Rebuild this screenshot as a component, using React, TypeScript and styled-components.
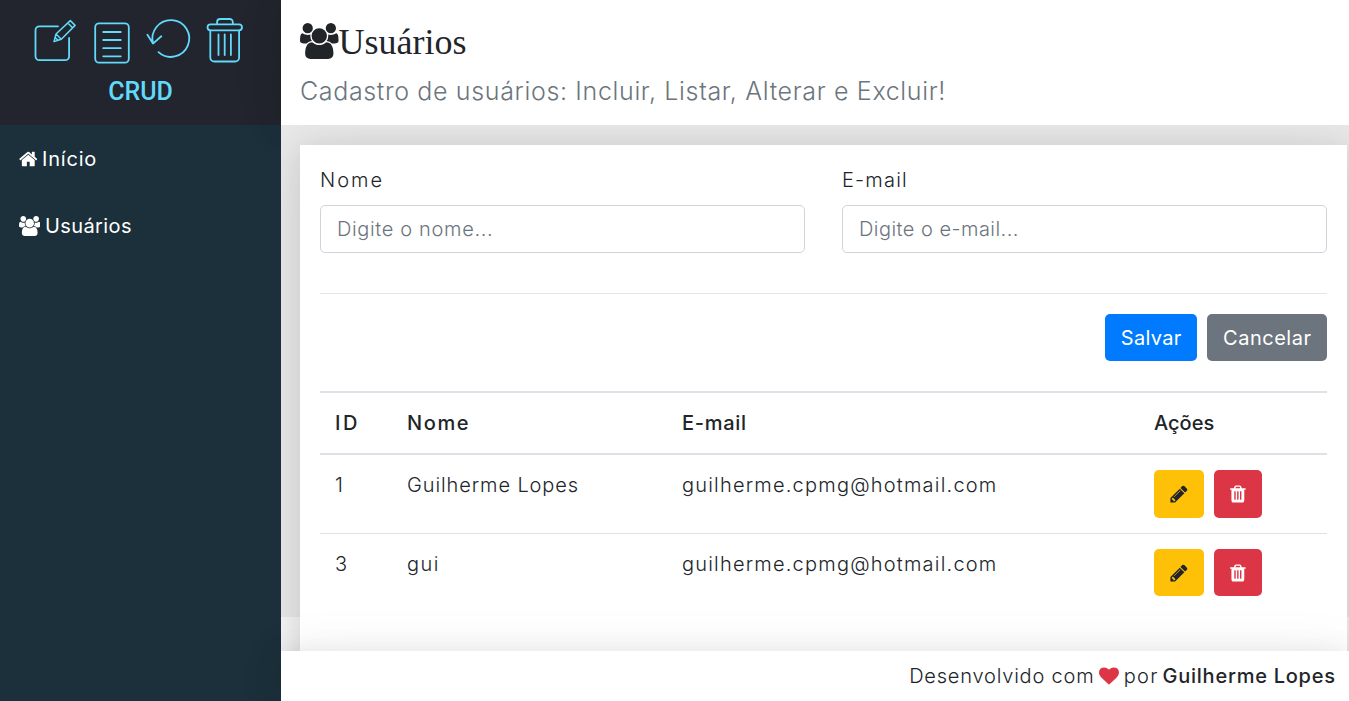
import React from 'react';
import styled, { createGlobalStyle } from 'styled-components';

const shadow = '0 2.5px 29px 0 rgba(0, 0, 0, 0.1), 0 2.5px 61px 0 rgba(0, 0, 0, 0.06)';

const GlobalStyle = createGlobalStyle`
  *, *::before, *::after { box-sizing: border-box; }
  html, body { margin: 0; height: 100%; overflow: hidden; }
  body {
    font-family: Inter, "Open Sans", sans-serif;
    font-size: 20px;
    font-weight: 300;
    line-height: 30px;
    color: #212529;
  }
`;

const Shell = styled.div`
  display: grid;
  grid-template-columns: 281px 1fr;
  grid-template-rows: 125px minmax(0, 1fr) 50px;
  grid-template-areas: 'logo header' 'menu content' 'menu footer';
  height: 100vh;
  overflow: hidden;
  background: #f5f5f5;
`;

const Logo = styled.aside`
  grid-area: logo;
  display: flex;
  flex-direction: column;
  align-items: center;
  padding-top: 12px;
  background: #22252d;
  box-shadow: ${shadow};
`;

const LogoText = styled.span`
  font: 500 25px/30px Roboto, sans-serif;
  color: #61dafb;
  margin-top: 9px;
`;

const Menu = styled.aside`
  grid-area: menu;
  background: #1c303b;
`;

const MenuLink = styled.a`
  display: flex;
  align-items: center;
  gap: 5px;
  height: 67px;
  padding-left: 18.5px;
  color: #fff;
  font-weight: 400;
`;

const Header = styled.header`
  grid-area: header;
  padding: 22px 19px 0;
  background: #fff;
  box-shadow: ${shadow};
`;

const Title = styled.h1`
  display: flex;
  align-items: flex-start;
  height: 51px;
  margin: 0;
  padding-top: 1px;
  font: 400 36px/39px "Liberation Serif", serif;
`;

const Subtitle = styled.p`
  margin: 0;
  font-size: 25px;
  line-height: 37px;
  letter-spacing: 0.65px;
  color: #6c757d;
`;

const Main = styled.main`
  grid-area: content;
  overflow: hidden;
  background: #f5f5f5;
`;

const Content = styled.div`
  height: 492px;
  padding: 20px 2px 0 19px;
  background: #e8e8e8;
`;

const Card = styled.section`
  height: 560px;
  padding: 20px;
  background: #fff;
  box-shadow: ${shadow};
`;

const Fields = styled.div`
  display: grid;
  grid-template-columns: 1fr 1fr;
  column-gap: 37px;
`;

const Field = styled.label`
  display: flex;
  flex-direction: column;
  gap: 10px;
`;

const Input = styled.input<{ $track: number }>`
  height: 48px;
  padding: 0 16px;
  border: 1px solid #ced4da;
  border-radius: 5px;
  font: inherit;
  letter-spacing: ${(p) => p.$track}px;
  outline: none;
  &::placeholder { color: #6c757d; opacity: 1; }
`;

const Divider = styled.hr`
  margin: 40px 0 20px;
  border: 0;
  border-top: 1px solid rgba(0, 0, 0, 0.1);
`;

const Actions = styled.div`
  display: flex;
  justify-content: flex-end;
  gap: 10px;
  margin-bottom: 30px;
`;

const tones = {
  primary: ['#007bff', '#fff'],
  secondary: ['#6c757d', '#fff'],
  warning: ['#ffc107', '#212529'],
  danger: ['#dc3545', '#fff'],
};

const Button = styled.button<{ $tone: keyof typeof tones; $width: number; $height?: number }>`
  display: flex;
  align-items: center;
  justify-content: center;
  width: ${(p) => p.$width}px;
  height: ${(p) => p.$height ?? 47}px;
  padding: 0;
  border: 0;
  border-radius: 5px;
  font: inherit;
  font-weight: 400;
  background: ${(p) => tones[p.$tone][0]};
  color: ${(p) => tones[p.$tone][1]};
`;

const Table = styled.table`
  width: 100%;
  table-layout: fixed;
  border-collapse: separate;
  border-spacing: 0;
`;

const Th = styled.th<{ $width?: number }>`
  width: ${(p) => (p.$width ? `${p.$width}px` : 'auto')};
  height: 64px;
  padding: 0 15px;
  border-top: 2px solid #dee2e6;
  border-bottom: 2px solid #dee2e6;
  font-weight: 500;
  text-align: left;
`;

const Row = styled.tr`
  & + & > td { border-top: 1px solid #dee2e6; }
`;

const Td = styled.td`
  padding: 15px;
  vertical-align: top;
`;

const RowActions = styled.div`
  display: flex;
  gap: 10px;
`;

const Footer = styled.footer`
  grid-area: footer;
  display: flex;
  align-items: center;
  justify-content: flex-end;
  padding-right: 14px;
  white-space: nowrap;
  background: #fff;
  box-shadow: ${shadow};
`;

const Strong = styled.strong`
  margin-left: 5px;
  font-weight: 500;
`;

const Heart = styled.span`
  display: flex;
  margin: 0 5px;
  color: #dc3545;
`;

const Tracked = styled.span<{ $track: number }>`
  letter-spacing: ${(p) => p.$track}px;
  margin-right: ${(p) => -p.$track}px;
`;

const Glyph = styled.svg`
  display: block;
  flex: none;
  fill: currentColor;
`;

const paths = {
  home: 'M1472 992v480q0 26-19 45t-45 19h-384v-384h-256v384h-384q-26 0-45-19t-19-45v-480q0-1 .5-3t.5-3l575-474 575 474q1 2 1 6zm223-69l-62 74q-8 9-21 11h-3q-13 0-21-7l-692-577-692 577q-12 8-24 7-13-2-21-11l-62-74q-8-10-7-23.5t11-21.5l719-599q32-26 76-26t76 26l244 204v-195q0-14 9-23t23-9h192q14 0 23 9t9 23v408l219 182q10 8 11 21.5t-7 23.5z',
  users: 'M657 896q-162 5-265 128h-134q-82 0-138-40.5t-56-118.5q0-353 124-353 6 0 43.5 21t97.5 42.5 119 21.5q67 0 133-23-5 37-5 66 0 159 81 256zm1071 637q0 120-73 189.5t-194 69.5h-874q-121 0-194-69.5t-73-189.5q0-53 3.5-103.5t14-109 26.5-108.5 43-97.5 62-81 85.5-53.5 111.5-20q10 0 43 21.5t73 48 107 48 135 21.5 135-21.5 107-48 73-48 43-21.5q61 0 111.5 20t85.5 53.5 62 81 43 97.5 26.5 108.5 14 109 3.5 103.5zm-1024-1277q0 106-75 181t-181 75-181-75-75-181 75-181 181-75 181 75 75 181zm704 384q0 159-112.5 271.5t-271.5 112.5-271.5-112.5-112.5-271.5 112.5-271.5 271.5-112.5 271.5 112.5 112.5 271.5zm576 225q0 78-56 118.5t-138 40.5h-134q-103-123-265-128 81-97 81-256 0-29-5-66 66 23 133 23 59 0 119-21.5t97.5-42.5 43.5-21q124 0 124 353zm-128-609q0 106-75 181t-181 75-181-75-75-181 75-181 181-75 181 75 75 181z',
  pencil: 'M491 1536l91-91-235-235-91 91v107h128v128h107zm523-928q0-22-22-22-10 0-17 7l-542 542q-7 7-7 17 0 22 22 22 10 0 17-7l542-542q7-7 7-17zm-54-192l416 416-832 832h-416v-416zm683 96q0 53-37 90l-166 166-416-416 166-165q36-38 90-38 53 0 91 38l235 234q37 39 37 91z',
  trash: 'M704 1376v-704q0-14-9-23t-23-9h-64q-14 0-23 9t-9 23v704q0 14 9 23t23 9h64q14 0 23-9t9-23zm256 0v-704q0-14-9-23t-23-9h-64q-14 0-23 9t-9 23v704q0 14 9 23t23 9h64q14 0 23-9t9-23zm256 0v-704q0-14-9-23t-23-9h-64q-14 0-23 9t-9 23v704q0 14 9 23t23 9h64q14 0 23-9t9-23zm-544-992h448l-48-117q-7-9-17-11h-317q-10 2-17 11zm928 32v64q0 14-9 23t-23 9h-96v948q0 83-47 143.5t-113 60.5h-832q-66 0-113-58.5t-47-141.5v-952h-96q-14 0-23-9t-9-23v-64q0-14 9-23t23-9h309l70-167q15-37 54-63t79-26h320q40 0 79 26t54 63l70 167h309q14 0 23 9t9 23z',
  heart: 'M896 1664q-26 0-44-18l-624-602q-10-8-27.5-26t-55.5-65.5-68-97.5-53.5-121-23.5-138q0-220 127-344t351-124q62 0 126.5 21.5t120 58 95.5 68.5 76 68q36-36 76-68t95.5-68.5 120-58 126.5-21.5q224 0 351 124t127 344q0 221-229 450l-623 600q-18 18-44 18z',
};

const boxes = {
  home: '64 0 1664 1792',
  users: '64 0 1920 1792',
  pencil: '90 0 1536 1792',
  trash: '192 0 1408 1792',
  heart: '0 0 1792 1792',
};

function Icon({ name, size = 20 }: { name: keyof typeof paths; size?: number }) {
  const width = (Number(boxes[name].split(' ')[2]) / 1792) * size;
  return (
    <Glyph width={width} height={size} viewBox={boxes[name]}>
      <path d={paths[name]} />
    </Glyph>
  );
}

function CrudMark() {
  return (
    <svg width="221" height="56" viewBox="30.5 12 221 56" fill="none" stroke="#61dafb" strokeWidth="1.8" strokeLinecap="round" strokeLinejoin="round">
      <path d="M58.5 26.3H40a4 4 0 0 0-4 4V56.200a4 4 0 0 0 4 4H65.600a4 4 0 0 0 4-4V37.800" />
      <path d="M54.500 41.600l2-7.600L70.800 20.600l4.800 4.800L61.800 39.300zM56.500 34l5.300 5.300M55.700 37.500l2.800 2.800M68.300 23l4.800 4.800" strokeWidth="1.5" />
      <rect x="95.700" y="23.300" width="33.600" height="39.400" rx="4" />
      <path d="M103.700 32h17.600M103.700 40h17.600M103.700 48.200h17.600M103.700 56.300h17.600" />
      <path d="M159 52.200A18.400 18.400 0 1 0 153.600 43.500M147.900 34.700l5.600 8.900 8.300-7.300" />
      <rect x="208" y="24.300" width="34.500" height="6" rx="3" />
      <path d="M217.600 24v-2a3 3 0 0 1 3-3h9.700a3 3 0 0 1 3 3v2M210.800 30.600V57.500a4 4 0 0 0 4 4h20.800a4 4 0 0 0 4-4V30.600M219 34.500v20.500M225.200 34.500v20.500M231.400 34.500v20.500" />
    </svg>
  );
}

const users = [
  { id: 1, name: 'Guilherme Lopes', track: 0.9, email: 'guilherme.cpmg@hotmail.com' },
  { id: 3, name: 'gui', track: 1.4, email: 'guilherme.cpmg@hotmail.com' },
];

export default function App() {
  return (
    <>
      <GlobalStyle />
      <Shell>
        <Logo>
          <CrudMark />
          <LogoText>CRUD</LogoText>
        </Logo>
        <Menu>
          <MenuLink>
            <Icon name="home" />
            <Tracked $track={0.8}>Início</Tracked>
          </MenuLink>
          <MenuLink>
            <Icon name="users" />
            <Tracked $track={0.4}>Usuários</Tracked>
          </MenuLink>
        </Menu>
        <Header>
          <Title>
            <Icon name="users" size={36} />
            Usuários
          </Title>
          <Subtitle>Cadastro de usuários: Incluir, Listar, Alterar e Excluir!</Subtitle>
        </Header>
        <Main>
          <Content>
            <Card>
              <Fields>
                <Field>
                  <Tracked $track={2}>Nome</Tracked>
                  <Input $track={0.65} placeholder="Digite o nome..." />
                </Field>
                <Field>
                  <Tracked $track={1.2}>E-mail</Tracked>
                  <Input $track={0.46} placeholder="Digite o e-mail..." />
                </Field>
              </Fields>
              <Divider />
              <Actions>
                <Button $tone="primary" $width={92}>
                  <Tracked $track={0.3}>Salvar</Tracked>
                </Button>
                <Button $tone="secondary" $width={120}>
                  <Tracked $track={0.5}>Cancelar</Tracked>
                </Button>
              </Actions>
              <Table>
                <thead>
                  <tr>
                    <Th $width={72}><Tracked $track={2.5}>ID</Tracked></Th>
                    <Th $width={275}><Tracked $track={1.6}>Nome</Tracked></Th>
                    <Th $width={472}><Tracked $track={0.7}>E-mail</Tracked></Th>
                    <Th><Tracked $track={0}>Ações</Tracked></Th>
                  </tr>
                </thead>
                <tbody>
                  {users.map((user) => (
                    <Row key={user.id}>
                      <Td>{user.id}</Td>
                      <Td><Tracked $track={user.track}>{user.name}</Tracked></Td>
                      <Td><Tracked $track={1.2}>{user.email}</Tracked></Td>
                      <Td>
                        <RowActions>
                          <Button $tone="warning" $width={50} $height={user.id === 1 ? 48 : 47}>
                            <Icon name="pencil" />
                          </Button>
                          <Button $tone="danger" $width={48} $height={user.id === 1 ? 48 : 47}>
                            <Icon name="trash" />
                          </Button>
                        </RowActions>
                      </Td>
                    </Row>
                  ))}
                </tbody>
              </Table>
            </Card>
          </Content>
        </Main>
        <Footer>
          <Tracked $track={0.8}>Desenvolvido com</Tracked>
          <Heart><Icon name="heart" /></Heart>
          <Tracked $track={1.4}>por</Tracked>
          <Strong><Tracked $track={0.75}>Guilherme Lopes</Tracked></Strong>
        </Footer>
      </Shell>
    </>
  );
}
